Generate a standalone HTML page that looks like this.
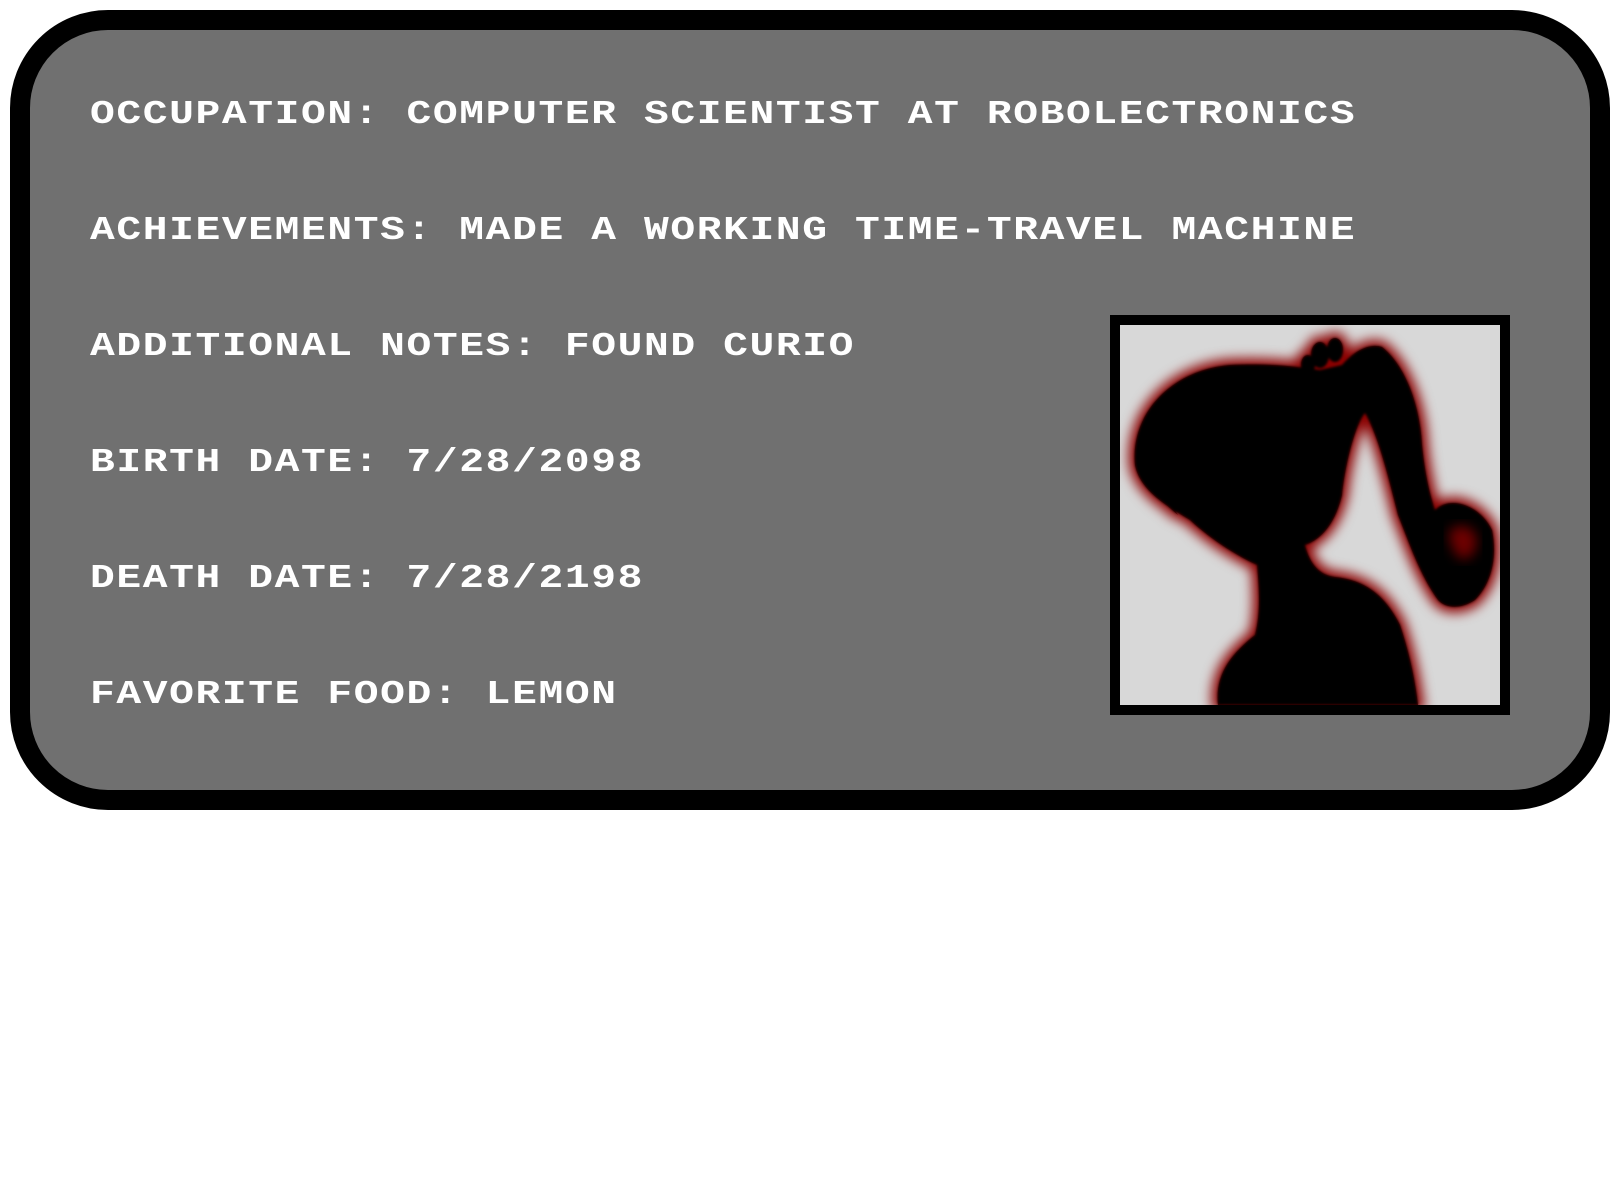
<!DOCTYPE html>
<html><head><meta charset="utf-8"><style>
html,body{margin:0;padding:0;background:#fff;width:1620px;height:1190px;overflow:hidden}
.card{position:absolute;left:10px;top:10px;width:1560px;height:760px;background:#707070;border:20px solid #000;border-radius:98px}
.t{position:absolute;left:90px;font-family:"Liberation Mono",monospace;font-weight:bold;font-size:33px;letter-spacing:1.3px;color:#fff;white-space:nowrap;line-height:1;transform:scaleX(1.25);transform-origin:0 0}
.ph{position:absolute;left:1110px;top:315px;width:380px;height:380px;border:10px solid #000;background:#d8d8d8;overflow:hidden}
</style></head><body>
<div class="card"></div>
<div class="t" style="top:98px">OCCUPATION: COMPUTER SCIENTIST AT ROBOLECTRONICS</div>
<div class="t" style="top:214px">ACHIEVEMENTS: MADE A WORKING TIME-TRAVEL MACHINE</div>
<div class="t" style="top:330px">ADDITIONAL NOTES: FOUND CURIO</div>
<div class="t" style="top:446px">BIRTH DATE: 7/28/2098</div>
<div class="t" style="top:562px">DEATH DATE: 7/28/2198</div>
<div class="t" style="top:678px">FAVORITE FOOD: LEMON</div>
<div class="ph">
<svg width="380" height="380" viewBox="0 0 380 380">
<defs><filter id="b" x="-20%" y="-20%" width="140%" height="140%"><feGaussianBlur stdDeviation="6"/></filter>
<filter id="s"><feGaussianBlur stdDeviation="1.2"/></filter></defs>
<g id="sil">
<path d="M15,140 C10,90 50,45 110,40 C150,38 180,42 200,45 L222,40 C235,25 250,18 262,22 C285,40 300,80 302,120 C305,150 310,170 315,185 C330,170 360,180 372,205 C378,235 370,260 355,275 C340,285 325,283 318,275 C300,250 290,220 278,190 C268,150 258,110 245,88 C235,100 225,140 222,170 C215,200 200,215 185,220 C190,240 200,250 215,252 C245,255 265,270 280,300 C290,330 295,355 298,380 L98,380 C95,350 110,330 135,310 C140,290 140,270 137,240 C120,232 95,218 70,195 C45,180 20,165 15,140 Z"/>
<path d="M20,130 C25,160 40,175 58,190 C48,175 42,160 40,145 Z"/>
<ellipse cx="200" cy="30" rx="9" ry="13"/><ellipse cx="215" cy="25" rx="8" ry="12"/><ellipse cx="188" cy="40" rx="7" ry="10"/>
</g>
<use href="#sil" fill="#8a0000" stroke="#8a0000" stroke-width="12" filter="url(#b)"/>
<use href="#sil" fill="#000" filter="url(#s)"/>
<path d="M330,205 C345,195 360,205 356,222 C352,235 342,238 335,228 C330,218 328,210 330,205Z" fill="#8a0000" filter="url(#b)" opacity="0.8"/>
</svg>
</div>
</body></html>
